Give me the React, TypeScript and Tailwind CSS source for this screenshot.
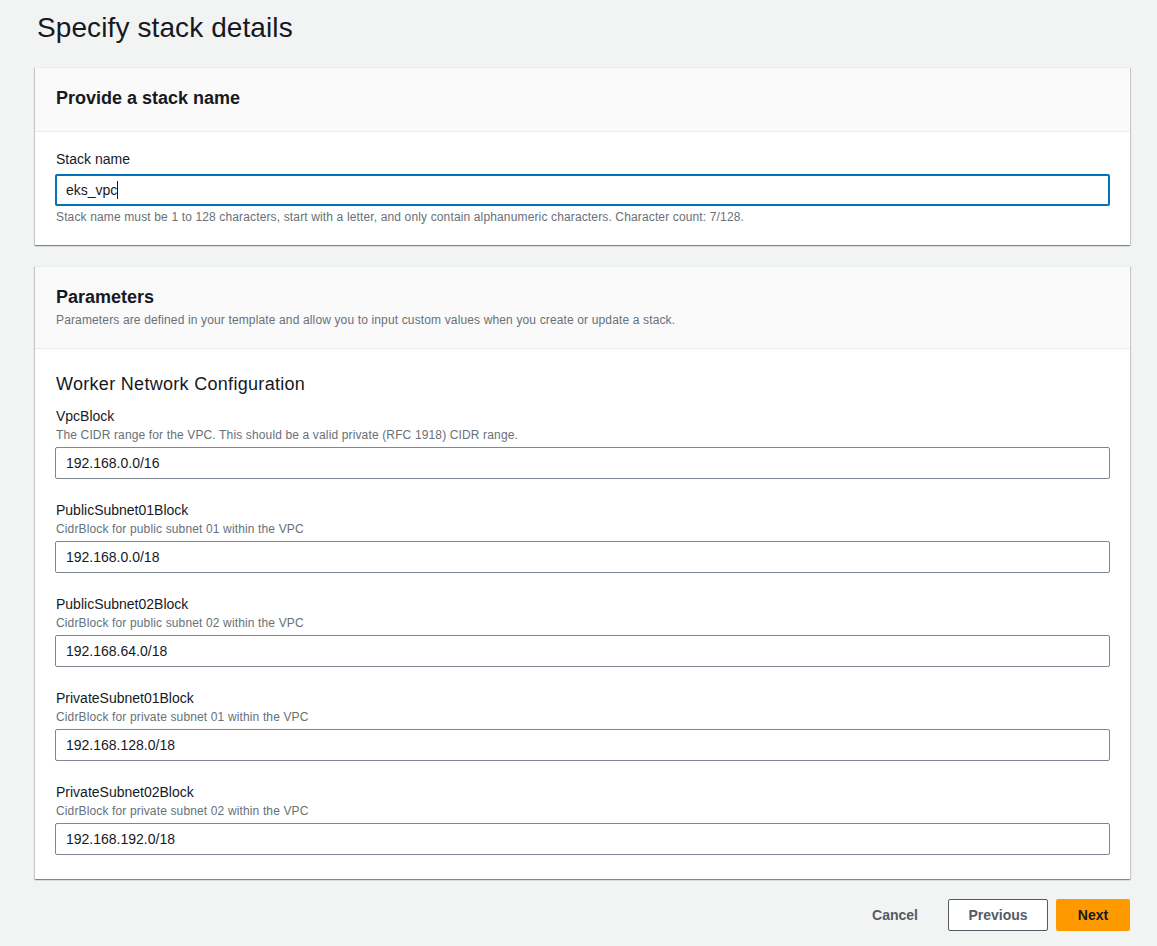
import React from 'react';

const params = [
  { name: 'VpcBlock', desc: 'The CIDR range for the VPC. This should be a valid private (RFC 1918) CIDR range.', value: '192.168.0.0/16' },
  { name: 'PublicSubnet01Block', desc: 'CidrBlock for public subnet 01 within the VPC', value: '192.168.0.0/18' },
  { name: 'PublicSubnet02Block', desc: 'CidrBlock for public subnet 02 within the VPC', value: '192.168.64.0/18' },
  { name: 'PrivateSubnet01Block', desc: 'CidrBlock for private subnet 01 within the VPC', value: '192.168.128.0/18' },
  { name: 'PrivateSubnet02Block', desc: 'CidrBlock for private subnet 02 within the VPC', value: '192.168.192.0/18' },
];

const cardCls =
  'bg-white border-t border-[#eaeded] shadow-[0_1px_1px_0_rgba(0,28,36,0.3),1px_1px_1px_0_rgba(0,28,36,0.15),-1px_1px_1px_0_rgba(0,28,36,0.15)]';

export default function App() {
  return (
    <div
      className="min-h-[946px] bg-[#f2f3f3] text-[#16191f] pl-[35px] pr-[27px]"
      style={{ fontFamily: '"Liberation Sans", Arial, sans-serif' }}
    >
      {/* Page title */}
      <h1 className="pt-[10px] pl-[2px] text-[28px] leading-[36px] font-normal tracking-[0.1px]">Specify stack details</h1>

      {/* Stack name card */}
      <section className={`${cardCls} mt-[21px]`}>
        <div className="bg-[#fafafa] border-b border-[#eaeded] px-[21px] pt-[19px] pb-[22px]">
          <h2 className="text-[18px] leading-[22px] font-bold">Provide a stack name</h2>
        </div>
        <div className="px-[20px] pt-[16px] pb-[20px]">
          <label className="block text-[14px] leading-[22px] pl-[1px]">Stack name</label>
          <div className="mt-[4px] h-[32px] border-2 border-[#0073bb] rounded-[2px] flex items-center pl-[9px] text-[14px]">
            <span>eks_vpc</span>
            <span className="w-px h-[18px] bg-[#16191f]" />
          </div>
          <p className="mt-[3px] text-[12px] leading-[16px] text-[#687078] pl-[1px] tracking-[0.14px]">
            Stack name must be 1 to 128 characters, start with a letter, and only contain alphanumeric characters. Character count: 7/128.
          </p>
        </div>
      </section>

      {/* Parameters card */}
      <section className={`${cardCls} mt-[21px]`}>
        <div className="bg-[#fafafa] border-b border-[#eaeded] px-[21px] pt-[19px] pb-[20px]">
          <h2 className="text-[18px] leading-[22px] font-bold">Parameters</h2>
          <p className="mt-[4px] text-[12px] leading-[16px] text-[#687078] tracking-[0.14px]">
            Parameters are defined in your template and allow you to input custom values when you create or update a stack.
          </p>
        </div>
        <div className="px-[20px] pt-[23px] pb-[24px]">
          <h3 className="text-[18px] leading-[24px] font-normal pl-[1px] tracking-[0.3px]">Worker Network Configuration</h3>
          <div className="mt-[9px] flex flex-col gap-[20px]">
            {params.map((p) => (
              <div key={p.name}>
                <label className="block text-[14px] leading-[22px] pl-[1px]">{p.name}</label>
                <p className="text-[12px] leading-[16px] text-[#687078] pl-[1px] tracking-[0.14px]">{p.desc}</p>
                <div className="mt-[4px] h-[32px] border border-[#7d8792] rounded-[2px] flex items-center pl-[10px] text-[14px]">
                  {p.value}
                </div>
              </div>
            ))}
          </div>
        </div>
      </section>

      {/* Actions */}
      <div className="mt-[20px] flex justify-end items-center">
        <button className="h-[32px] px-[20px] text-[14px] font-bold text-[#545b64]">Cancel</button>
        <button className="ml-[10px] h-[32px] w-[100px] border border-[#545b64] rounded-[2px] bg-white text-[14px] font-bold text-[#545b64]">
          Previous
        </button>
        <button className="ml-[8px] h-[32px] w-[74px] rounded-[2px] bg-[#ff9900] text-[14px] font-bold text-[#16191f]">
          Next
        </button>
      </div>
    </div>
  );
}
